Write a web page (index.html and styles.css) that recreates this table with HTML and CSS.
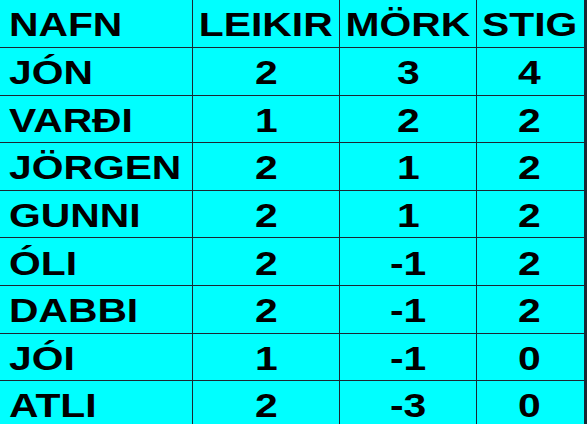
FILE: index.html
```html
<!DOCTYPE html>
<html lang="is">
<head>
<meta charset="utf-8">
<title>Staða</title>
<link rel="stylesheet" href="styles.css">
</head>
<body>
<div class="board">
  <div class="cell name head"><span>NAFN</span></div>
  <div class="cell head"><span>LEIKIR</span></div>
  <div class="cell head"><span>MÖRK</span></div>
  <div class="cell head last"><span>STIG</span></div>

  <div class="cell name"><span>JÓN</span></div>
  <div class="cell"><span>2</span></div>
  <div class="cell"><span>3</span></div>
  <div class="cell last"><span>4</span></div>

  <div class="cell name"><span>VARÐI</span></div>
  <div class="cell"><span>1</span></div>
  <div class="cell"><span>2</span></div>
  <div class="cell last"><span>2</span></div>

  <div class="cell name"><span>JÖRGEN</span></div>
  <div class="cell"><span>2</span></div>
  <div class="cell"><span>1</span></div>
  <div class="cell last"><span>2</span></div>

  <div class="cell name"><span>GUNNI</span></div>
  <div class="cell"><span>2</span></div>
  <div class="cell"><span>1</span></div>
  <div class="cell last"><span>2</span></div>

  <div class="cell name"><span>ÓLI</span></div>
  <div class="cell"><span>2</span></div>
  <div class="cell"><span>-1</span></div>
  <div class="cell last"><span>2</span></div>

  <div class="cell name"><span>DABBI</span></div>
  <div class="cell"><span>2</span></div>
  <div class="cell"><span>-1</span></div>
  <div class="cell last"><span>2</span></div>

  <div class="cell name"><span>JÓI</span></div>
  <div class="cell"><span>1</span></div>
  <div class="cell"><span>-1</span></div>
  <div class="cell last"><span>0</span></div>

  <div class="cell name"><span>ATLI</span></div>
  <div class="cell"><span>2</span></div>
  <div class="cell"><span>-3</span></div>
  <div class="cell last"><span>0</span></div>
</div>
</body>
</html>
```
FILE: styles.css
```css
html, body {
  margin: 0;
  padding: 0;
  background: #ffffff;
  overflow: hidden;
}

.board {
  display: grid;
  grid-template-columns: 193px 147px 137px 110px;
  grid-template-rows: 48px;
  grid-auto-rows: 47.6px;
  width: 587px;
  background: #00ffff;
  font-family: "Liberation Sans", Arial, sans-serif;
  font-weight: bold;
  font-size: 34px;
  color: #000000;
}

.cell {
  box-sizing: border-box;
  border-right: 1px solid #1b2733;
  border-bottom: 1px solid #1b2733;
  display: flex;
  align-items: center;
  justify-content: center;
  padding-top: 2px;
  line-height: 1;
}

.cell.head {
  padding-top: 0;
}

.cell.last {
  border-right: 3px solid #1b2733;
  padding-right: 2px;
}

.cell span {
  display: inline-block;
  transform: scaleX(1.2);
  transform-origin: center;
  white-space: nowrap;
}

.cell.name {
  justify-content: flex-start;
  padding-left: 9px;
}

.cell.name span {
  transform-origin: left center;
}
```
